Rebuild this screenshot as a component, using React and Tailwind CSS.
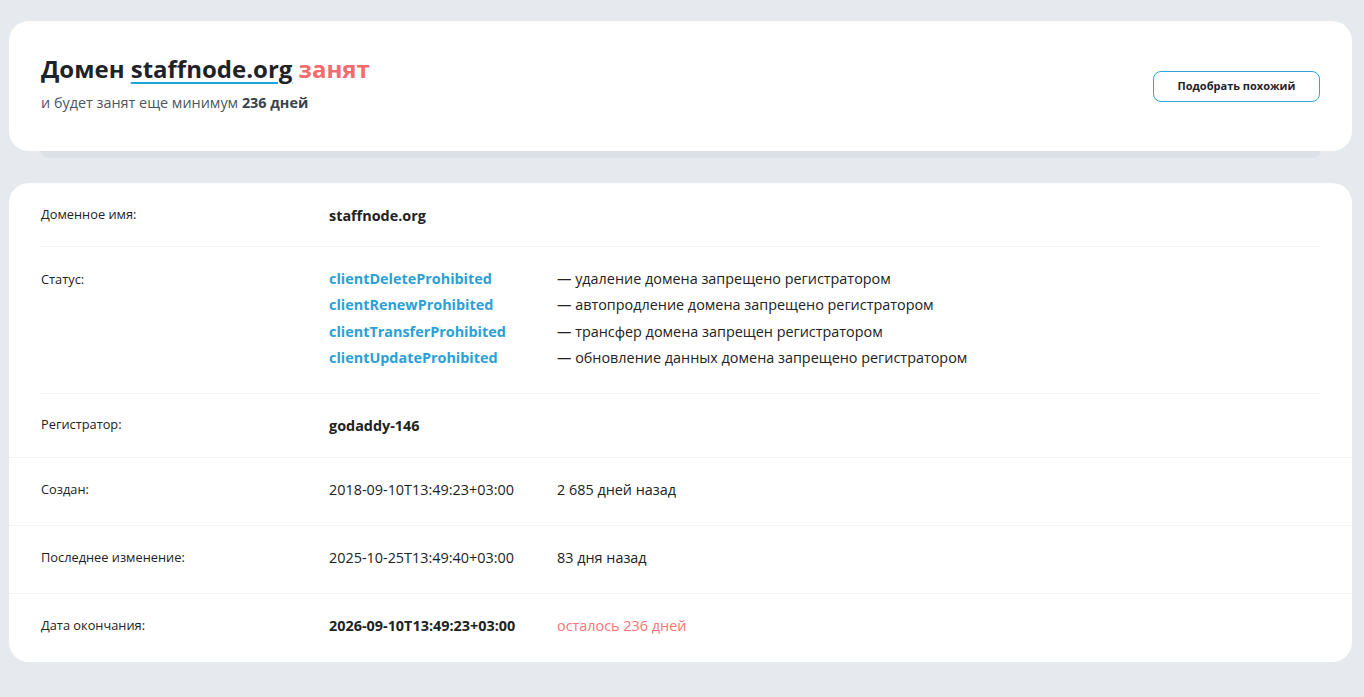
const statuses = [
  ['clientDeleteProhibited', '— удаление домена запрещено регистратором'],
  ['clientRenewProhibited', '— автопродление домена запрещено регистратором'],
  ['clientTransferProhibited', '— трансфер домена запрещен регистратором'],
  ['clientUpdateProhibited', '— обновление данных домена запрещено регистратором'],
]

function Row({ label, children, className = '' }) {
  return (
    <div className={`grid grid-cols-[288px_1fr] items-center px-8 ${className}`}>
      <div className="text-[12.8px] text-[#222]">{label}</div>
      <div>{children}</div>
    </div>
  )
}

export default function App() {
  return (
    <div
      className="min-h-screen bg-[#e6eaee] pl-[9px] pr-[12px] pt-[21px] pb-9 text-[#222]"
      style={{ fontFamily: '"Open Sans", "Noto Sans", sans-serif' }}
    >
      {/* шапка */}
      <div>
        <div className="flex h-[130px] items-center justify-between rounded-[20px] bg-white pl-8 pr-8">
          <div className="pb-[6px]">
            <h1 className="text-[24px] font-bold leading-8 text-[#1f2328]">
              Домен{' '}
              <span className="underline decoration-[#1ea5d8] decoration-[1.5px] underline-offset-[4px]">staffnode.org</span>{' '}
              <span className="text-[#f46b6b]">занят</span>
            </h1>
            <p className="mt-[8px] text-[14.4px] leading-5 text-[#4b5560]">
              и будет занят еще минимум <b className="font-bold text-[#3a434c]">236 дней</b>
            </p>
          </div>
          <button className="h-[31px] w-[167px] rounded-[8px] border border-[#2aa8de] text-[11px] font-bold text-[#1f2328]">
            Подобрать похожий
          </button>
        </div>
        <div className="mx-8 h-[7px] rounded-b-[8px] bg-[#dce1e7]"></div>
      </div>

      {/* данные */}
      <div className="mt-[25px] rounded-[20px] bg-white">
        <Row label="Доменное имя:" className="h-[63px]">
          <span className="text-[14.4px] font-bold">staffnode.org</span>
        </Row>
        <div className="mx-8 h-px bg-[#f1f3f5]"></div>

        <div className="grid grid-cols-[288px_1fr] px-8 pt-[19px] pb-[22px]">
          <div className="text-[12.8px] leading-[26px]">Статус:</div>
          <div className="flex flex-col">
            {statuses.map(([code, text]) => (
              <div key={code} className="grid grid-cols-[228px_1fr] text-[14.4px] leading-[26.3px]">
                <span className="font-bold text-[#2aa1d6]">{code}</span>
                <span>{text}</span>
              </div>
            ))}
          </div>
        </div>
        <div className="mx-8 h-px bg-[#f1f3f5]"></div>

        <Row label="Регистратор:" className="h-[63px] pb-[2px]">
          <span className="text-[14.4px] font-bold">godaddy-146</span>
        </Row>
        <div className="h-px bg-[#f1f3f5]"></div>

        <Row label="Создан:" className="h-[67px] pb-[4px]">
          <div className="grid grid-cols-[228px_1fr] text-[14.4px]">
            <span>2018-09-10T13:49:23+03:00</span>
            <span>2 685 дней назад</span>
          </div>
        </Row>
        <div className="h-px bg-[#f1f3f5]"></div>

        <Row label="Последнее изменение:" className="h-[67px] pb-[4px]">
          <div className="grid grid-cols-[228px_1fr] text-[14.4px]">
            <span>2025-10-25T13:49:40+03:00</span>
            <span>83 дня назад</span>
          </div>
        </Row>
        <div className="h-px bg-[#f1f3f5]"></div>

        <Row label="Дата окончания:" className="h-[68px] pb-[5px]">
          <div className="grid grid-cols-[228px_1fr] text-[14.4px]">
            <span className="font-bold">2026-09-10T13:49:23+03:00</span>
            <span className="text-[#f87575]">осталось 236 дней</span>
          </div>
        </Row>
      </div>
    </div>
  )
}
